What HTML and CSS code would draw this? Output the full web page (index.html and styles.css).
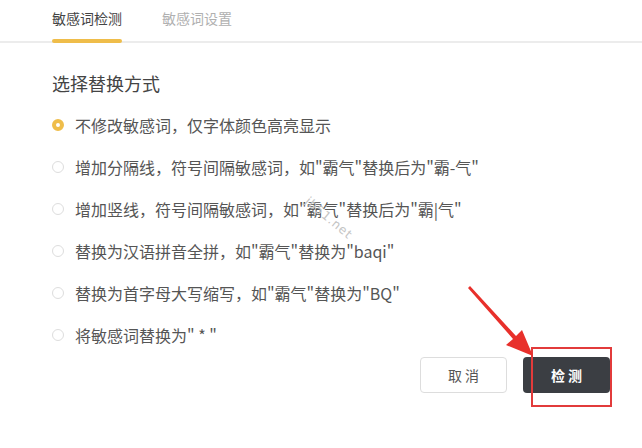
FILE: index.html
```html
<!DOCTYPE html>
<html lang="zh-CN">
<head>
  <meta charset="UTF-8">
  <title>敏感词检测</title>
  <link rel="stylesheet" href="styles.css">
</head>
<body>

<div class="tabs">
  <div class="tab active">敏感词检测</div>
  <div class="tab">敏感词设置</div>
</div>

<div class="panel">
  <h3>选择替换方式</h3>

  <div class="options">
    <label class="option"><span class="radio checked"></span>不修改敏感词，仅字体颜色高亮显示</label>
    <label class="option"><span class="radio"></span>增加分隔线，符号间隔敏感词，如"霸气"替换后为"霸-气"</label>
    <label class="option"><span class="radio"></span>增加竖线，符号间隔敏感词，如"霸气"替换后为"霸|气"</label>
    <label class="option"><span class="radio"></span>替换为汉语拼音全拼，如"霸气"替换为"baqi"</label>
    <label class="option"><span class="radio"></span>替换为首字母大写缩写，如"霸气"替换为"BQ"</label>
    <label class="option"><span class="radio"></span>将敏感词替换为" * "</label>
  </div>

  <div class="actions">
    <button class="btn cancel">取 消</button>
    <button class="btn primary">检 测</button>
  </div>
</div>

<span class="watermark">jb51.net</span>
<div class="highlight"></div>
<svg class="arrow" width="80" height="80" viewBox="0 0 80 80">
  <polygon points="3,3 5,1 51,51 57,45 68,71 41,60 48,54" fill="#e8302b"/>
</svg>

</body>
</html>
```

FILE: styles.css
```css
html, body {
  margin: 0;
  padding: 0;
  font-family: "Noto Sans CJK SC", "Noto Sans", sans-serif;
  background-color: #fff;
  color: #333;
}

body {
  width: 642px;
  height: 448px;
  position: relative;
  overflow: hidden;
}

.tabs {
  display: flex;
  gap: 40px;
  padding-left: 52px;
  border-bottom: 2px solid #ececec;
  box-sizing: border-box;
  height: 43px;
}

.tab {
  font-size: 14px;
  color: #b0b0b0;
  padding-top: 8px;
  width: 70px;
  text-align: center;
  position: relative;
}

.tab.active {
  color: #444;
}

.tab.active::after {
  content: "";
  position: absolute;
  left: 0;
  right: 0;
  bottom: -2px;
  height: 4px;
  border-radius: 2px;
  background-color: #efbd4a;
}

.panel {
  padding: 0 32px 0 52px;
}

h3 {
  margin: 25px 0 0;
  font-size: 18px;
  font-weight: normal;
  color: #444;
  line-height: 30px;
}

.options {
  margin-top: 6px;
}

.option {
  display: flex;
  align-items: center;
  height: 42px;
  font-size: 16px;
  color: #555;
}

.radio {
  width: 10px;
  height: 10px;
  border: 1px solid #ddd;
  border-radius: 50%;
  margin-right: 11px;
  flex-shrink: 0;
}

.radio.checked {
  width: 4px;
  height: 4px;
  border: 4px solid #efbd4a;
  background-color: #fff;
}

.actions {
  display: flex;
  justify-content: flex-end;
  gap: 16px;
  margin-top: 1px;
}

.btn {
  width: 87px;
  height: 36px;
  border-radius: 4px;
  font-family: "Noto Sans CJK SC", sans-serif;
  font-size: 14px;
  cursor: pointer;
}

.cancel {
  background-color: #fff;
  border: 1px solid #ddd;
  color: #555;
}

.primary {
  background-color: #3b3e43;
  border: none;
  color: #fff;
  font-weight: bold;
}

.watermark {
  position: absolute;
  left: 300px;
  top: 211px;
  font-size: 12px;
  letter-spacing: 1px;
  color: #c4c4c4;
  transform: rotate(40deg);
  font-family: "DejaVu Sans", sans-serif;
}

.highlight {
  position: absolute;
  left: 531px;
  top: 347px;
  width: 77px;
  height: 56px;
  border: 2px solid #e23b3b;
}

.arrow {
  position: absolute;
  left: 465px;
  top: 285px;
}
```
